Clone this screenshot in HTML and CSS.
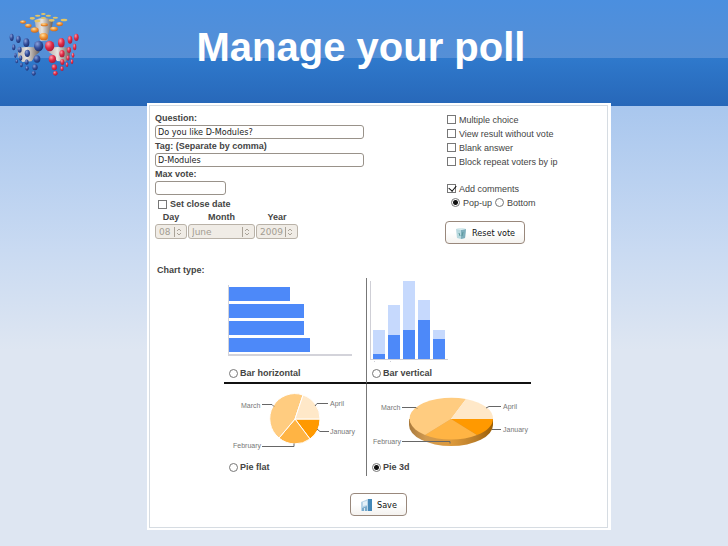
FILE: index.html
```html
<!DOCTYPE html>
<html lang="en">
<head>
    <meta charset="UTF-8">
    <meta name="viewport" content="width=device-width, initial-scale=1.0">
    <title>Manage your poll</title>
    <link rel="stylesheet" href="styles.css">
</head>
<body>
    <header class="page-header">
        <svg class="logo" viewBox="0 0 240 240" aria-hidden="true">
            <defs>
                <linearGradient id="metal">
                    <stop offset="0" stop-color="#b5aeaa"/>
                    <stop offset="0.4" stop-color="#e8e4df"/>
                    <stop offset="1" stop-color="#665c59"/>
                </linearGradient>
                <radialGradient id="navy" cx="0.35" cy="0.3" r="0.8">
                    <stop offset="0" stop-color="#8da3dc"/>
                    <stop offset="0.5" stop-color="#344f9c"/>
                    <stop offset="1" stop-color="#172966"/>
                </radialGradient>
                <radialGradient id="red" cx="0.35" cy="0.3" r="0.8">
                    <stop offset="0" stop-color="#ff9aa8"/>
                    <stop offset="0.5" stop-color="#e02a45"/>
                    <stop offset="1" stop-color="#9c1838"/>
                </radialGradient>
                <radialGradient id="orange" cx="0.4" cy="0.3" r="0.8">
                    <stop offset="0" stop-color="#ffe0a0"/>
                    <stop offset="0.5" stop-color="#f09030"/>
                    <stop offset="1" stop-color="#b85c20"/>
                </radialGradient>
            </defs>
            <path fill="url(#metal)" d="M104 60q27-12 55 0l-3 20q-9 8-11 22l-2 20h-22l-2-20q-3-14-12-22z"/>
            <path fill="url(#metal)" d="M53 145q30-7 62-1l4 12-12 10-12 18-28 2-12-14z"/>
            <path fill="url(#metal)" d="M146 144q32-6 65 1l-2 22-12 18-26-2-12-18-13-9z"/>
            <g fill="#e3c465">
                <ellipse cx="130" cy="42" rx="7" ry="3"/>
                <ellipse cx="113" cy="47" rx="8" ry="3"/>
                <ellipse cx="145" cy="47" rx="8" ry="3"/>
                <ellipse cx="97" cy="55" rx="8" ry="4"/>
                <ellipse cx="130" cy="54" rx="8" ry="3"/>
                <ellipse cx="166" cy="53" rx="8" ry="3"/>
                <ellipse cx="192" cy="60" rx="10" ry="4"/>
                <ellipse cx="155" cy="61" rx="9" ry="4"/>
                <ellipse cx="112" cy="63" rx="9" ry="4"/>
            </g>
            <g fill="url(#orange)">
                <ellipse cx="69" cy="66" rx="9" ry="5"/>
                <ellipse cx="85" cy="77" rx="10" ry="6"/>
                <ellipse cx="133" cy="74" rx="11" ry="5"/>
                <ellipse cx="179" cy="72" rx="10" ry="6"/>
                <ellipse cx="104" cy="90" rx="12" ry="8"/>
                <ellipse cx="162" cy="87" rx="12" ry="7"/>
                <ellipse cx="131" cy="110" rx="13" ry="11"/>
            </g>
            <g fill="url(#navy)">
                <ellipse cx="35" cy="112" rx="6" ry="11"/>
                <ellipse cx="55" cy="118" rx="7" ry="11"/>
                <ellipse cx="79" cy="128" rx="9" ry="13"/>
                <ellipse cx="116" cy="138" rx="14" ry="16"/>
                <ellipse cx="41" cy="142" rx="5" ry="9"/>
                <ellipse cx="59" cy="149" rx="6" ry="9"/>
                <ellipse cx="82" cy="160" rx="8" ry="11"/>
                <ellipse cx="111" cy="177" rx="10" ry="11"/>
                <ellipse cx="46" cy="166" rx="4" ry="8"/>
                <ellipse cx="62" cy="174" rx="5" ry="8"/>
                <ellipse cx="80" cy="186" rx="6" ry="8"/>
                <ellipse cx="105" cy="202" rx="8" ry="9"/>
                <ellipse cx="50" cy="184" rx="4" ry="6"/>
                <ellipse cx="64" cy="195" rx="4" ry="7"/>
                <ellipse cx="81" cy="205" rx="5" ry="7"/>
                <ellipse cx="101" cy="220" rx="6" ry="7"/>
            </g>
            <g fill="url(#red)">
                <ellipse cx="229" cy="112" rx="7" ry="11"/>
                <ellipse cx="210" cy="119" rx="7" ry="12"/>
                <ellipse cx="184" cy="128" rx="10" ry="14"/>
                <ellipse cx="149" cy="138" rx="14" ry="16"/>
                <ellipse cx="224" cy="141" rx="5" ry="10"/>
                <ellipse cx="207" cy="150" rx="6" ry="9"/>
                <ellipse cx="186" cy="161" rx="8" ry="11"/>
                <ellipse cx="157" cy="177" rx="11" ry="12"/>
                <ellipse cx="219" cy="166" rx="4" ry="8"/>
                <ellipse cx="204" cy="174" rx="5" ry="8"/>
                <ellipse cx="187" cy="186" rx="6" ry="9"/>
                <ellipse cx="163" cy="202" rx="8" ry="9"/>
                <ellipse cx="216" cy="185" rx="4" ry="7"/>
                <ellipse cx="201" cy="194" rx="4" ry="7"/>
                <ellipse cx="186" cy="206" rx="5" ry="7"/>
                <ellipse cx="166" cy="220" rx="7" ry="7"/>
            </g>
        </svg>
        <h1>Manage your poll</h1>
    </header>

    <main class="panel">
        <form class="poll-form">
            <div class="settings">
                <div class="details">
                    <label for="question">Question:</label>
                    <input type="text" id="question" class="text-input" value="Do you like D-Modules?">
                    <label for="tag">Tag: (Separate by comma)</label>
                    <input type="text" id="tag" class="text-input" value="D-Modules">
                    <label for="maxVote">Max vote:</label>
                    <input type="text" id="maxVote" class="text-input short">
                    <div class="close-date">
                        <input type="checkbox" id="closeDate">
                        <label for="closeDate">Set close date</label>
                    </div>
                    <div class="date-group">
                        <label for="day">Day</label>
                        <label for="month">Month</label>
                        <label for="year">Year</label>
                        <div class="select-box">
                            <select id="day" disabled><option>08</option></select>
                            <svg viewBox="0 0 10 10" aria-hidden="true"><path d="M.5 0v10M3 4l2-2 2 2M3 6l2 2 2-2"/></svg>
                        </div>
                        <div class="select-box">
                            <select id="month" disabled><option>June</option></select>
                            <svg viewBox="0 0 10 10" aria-hidden="true"><path d="M.5 0v10M3 4l2-2 2 2M3 6l2 2 2-2"/></svg>
                        </div>
                        <div class="select-box">
                            <select id="year" disabled><option>2009</option></select>
                            <svg viewBox="0 0 10 10" aria-hidden="true"><path d="M.5 0v10M3 4l2-2 2 2M3 6l2 2 2-2"/></svg>
                        </div>
                    </div>
                </div>

                <div class="options">
                    <div class="option">
                        <input type="checkbox" id="multiple">
                        <label for="multiple">Multiple choice</label>
                    </div>
                    <div class="option">
                        <input type="checkbox" id="viewResult">
                        <label for="viewResult">View result without vote</label>
                    </div>
                    <div class="option">
                        <input type="checkbox" id="blank">
                        <label for="blank">Blank answer</label>
                    </div>
                    <div class="option">
                        <input type="checkbox" id="blockIp">
                        <label for="blockIp">Block repeat voters by ip</label>
                    </div>
                    <div class="option comments">
                        <input type="checkbox" id="comments" checked>
                        <label for="comments">Add comments</label>
                    </div>
                    <div class="option placement">
                        <input type="radio" name="placement" id="popup" checked>
                        <label for="popup">Pop-up</label>
                        <input type="radio" name="placement" id="bottom">
                        <label for="bottom">Bottom</label>
                    </div>
                    <button type="button" class="btn">
                        <svg class="icon" viewBox="0 0 12 12" aria-hidden="true">
                            <path fill="#b9d9df" d="M1 2l5-1 5 1-1 9-4 1-4-1z"/>
                            <path fill="#7faebb" d="M6 3l5-1-1 9-4 1z"/>
                            <path fill="#dceef1" d="M1 2l5-1 5 1-5 1z"/>
                            <path fill="none" stroke="#5c9a9c" d="M4 6l1 3M8 5l-1 4"/>
                        </svg>
                        Reset vote
                    </button>
                </div>
            </div>

            <h2>Chart type:</h2>
            <div class="chart-types">
                <div class="chart">
                    <svg width="142" height="86" viewBox="0 0 142 86" aria-hidden="true">
                        <path fill="#d3d3da" d="M4 7h1v70H4zM4 76h124v2H4z"/>
                        <g fill="#4d89f9">
                            <rect x="5" y="9" width="61" height="14"/>
                            <rect x="5" y="26" width="75" height="14"/>
                            <rect x="5" y="43" width="75" height="14"/>
                            <rect x="5" y="60" width="81" height="14"/>
                        </g>
                    </svg>
                    <div class="choice">
                        <input type="radio" name="chart" id="barHorizontal">
                        <label for="barHorizontal">Bar horizontal</label>
                    </div>
                </div>
                <div class="chart">
                    <svg width="142" height="86" viewBox="0 0 142 86" aria-hidden="true">
                        <path fill="#cfcfd6" d="M3 3h1v78H3zM3 81h78v1H3zM7 83h1v1H7zM23 83h1v1H23z"/>
                        <g fill="#c6d9fd">
                            <rect x="6" y="52" width="12" height="24"/>
                            <rect x="21" y="27" width="12" height="30"/>
                            <rect x="36" y="3" width="12" height="49"/>
                            <rect x="51" y="22" width="12" height="20"/>
                            <rect x="66" y="52" width="12" height="9"/>
                        </g>
                        <g fill="#4d89f9">
                            <rect x="6" y="76" width="12" height="5"/>
                            <rect x="21" y="57" width="12" height="24"/>
                            <rect x="36" y="52" width="12" height="29"/>
                            <rect x="51" y="42" width="12" height="39"/>
                            <rect x="66" y="61" width="12" height="20"/>
                        </g>
                    </svg>
                    <div class="choice">
                        <input type="radio" name="chart" id="barVertical">
                        <label for="barVertical">Bar vertical</label>
                    </div>
                </div>
                <div class="chart">
                    <svg class="pie" width="142" height="74" viewBox="0 0 142 74">
                        <g stroke="#fff" stroke-width="1">
                            <path fill="#ff9900" d="M71 35h25a25 25 0 0 1-10 20z"/>
                            <path fill="#ffb444" d="M71 35l15 20a25 25 0 0 1-31-1z"/>
                            <path fill="#ffcc80" d="M71 35L55 54a25 25 0 0 1 24-43z"/>
                            <path fill="#ffe8c8" d="M71 35l8-24a25 25 0 0 1 17 24z"/>
                        </g>
                        <path class="leader" d="M38 20.5h10l2 2M91 22l2-2.500h11M93 45l3 2.500h9M38 62.500h32v-3"/>
                        <text x="17" y="24">March</text>
                        <text x="106" y="22">April</text>
                        <text x="106" y="50">January</text>
                        <text x="9" y="64">February</text>
                    </svg>
                    <div class="choice">
                        <input type="radio" name="chart" id="pieFlat">
                        <label for="pieFlat">Pie flat</label>
                    </div>
                </div>
                <div class="chart">
                    <svg class="pie" width="164" height="74" viewBox="0 0 164 74">
                        <defs>
                            <linearGradient id="rim">
                                <stop offset="0" stop-color="#a97a3c"/>
                                <stop offset="0.2" stop-color="#d19a50"/>
                                <stop offset="0.5" stop-color="#dd9a3c"/>
                                <stop offset="0.8" stop-color="#b97c28"/>
                                <stop offset="1" stop-color="#9c5d00"/>
                            </linearGradient>
                        </defs>
                        <path fill="url(#rim)" d="M42 35v6a42 21 0 0 0 84 0v-6z"/>
                        <path fill="#ff9900" d="M84 35h42a42 21 0 0 1-16 16z"/>
                        <path fill="#ffb444" d="M84 35l26 16a42 21 0 0 1-52 0z"/>
                        <path fill="#ffcc80" d="M84 35L58 51a42 21 0 0 1 41-36z"/>
                        <path fill="#ffe8c8" d="M84 35l15-20a42 21 0 0 1 27 20z"/>
                        <path class="leader" d="M35 23.500h14l1 1M119 24l3-1.500h12M125 45.500h9M35 57.500h48v2"/>
                        <text x="14" y="26">March</text>
                        <text x="136" y="25">April</text>
                        <text x="136" y="48">January</text>
                        <text x="6" y="60">February</text>
                    </svg>
                    <div class="choice">
                        <input type="radio" name="chart" id="pie3d" checked>
                        <label for="pie3d">Pie 3d</label>
                    </div>
                </div>
            </div>

            <button type="submit" class="btn btn-save">
                <svg class="icon" viewBox="0 0 12 12" aria-hidden="true">
                    <path fill="#b8d4e8" d="M1 3l7-3v12H1z"/>
                    <path fill="#4588b8" d="M8 0h4v12H8z"/>
                    <path fill="#e4f0f8" d="M3 3l4-1v4L3 7z"/>
                    <path fill="#7aaacb" d="M2 9l5-2v5H2z"/>
                    <path fill="#dcebf5" d="M4 9h1v3H4z"/>
                </svg>
                Save
            </button>
        </form>
    </main>
</body>
</html>
```

FILE: styles.css
```css
* {
    box-sizing: border-box;
}

body {
    margin: 0;
    min-height: 100vh;
    font-family: "Liberation Sans", Arial, sans-serif;
    font-size: 9px;
    line-height: 14px;
    color: #444;
    background: linear-gradient(#a9c7ee 106px, #c9daf2 250px, #dee6f2 350px);
}

/* Header */
.page-header {
    display: grid;
    grid-template-columns: 80px 1fr 86px;
    height: 106px;
    background: linear-gradient(#4b8fdf, #558fd6 58px, #2f79cc 58px, #2767b8);
}

.logo {
    width: 80px;
    height: 80px;
}

h1 {
    margin: 24px 0 0;
    font-size: 40px;
    line-height: 46px;
    text-align: center;
    color: white;
}

/* Form panel */
.panel {
    position: relative;
    margin: -3px 117px 16px 147px;
    padding: 2px 3px 2px 2px;
    background-color: white;
}

.poll-form {
    padding: 5px 0 11px 5px;
    border: 1px solid #d6dce2;
}

.settings {
    display: grid;
    grid-template-columns: 1fr 162px;
}

.details {
    display: flex;
    flex-direction: column;
    align-items: flex-start;
    font-weight: bold;
}

.text-input {
    width: 209px;
    height: 14px;
    padding: 0 2px;
    border: 1px solid #99928a;
    border-radius: 3px;
    background-color: white;
    font: 9px "DejaVu Sans Condensed", "DejaVu Sans", sans-serif;
    color: #222;
}

.short {
    width: 71px;
}

.close-date {
    display: flex;
    align-items: center;
    gap: 3px;
    height: 16px;
    padding: 2px 0 0 3px;
}

.date-group {
    display: grid;
    grid-template-columns: 32px 67px 42px;
    column-gap: 1px;
    line-height: 13px;
    text-align: center;
}

/* Select with the up/down arrows on its right edge */
.select-box {
    display: grid;
    align-items: center;
}

.select-box select,
.select-box svg {
    grid-area: 1 / 1;
}

.select-box select {
    width: 100%;
    height: 15px;
    padding: 0 3px;
    border: 1px solid #b9b2a8;
    border-radius: 3px;
    appearance: none;
    background-color: #f0ece6;
    font: 9px "DejaVu Sans", sans-serif;
    color: #a39c92;
    opacity: 1;
}

.select-box svg {
    justify-self: end;
    width: 10px;
    height: 10px;
    margin-right: 3px;
    fill: none;
    stroke: #aaa398;
    pointer-events: none;
}

/* Tick boxes and radios */
input[type="checkbox"],
input[type="radio"] {
    flex: none;
    width: 9px;
    height: 9px;
    margin: 0;
    border: 1px solid #777;
    appearance: none;
    background-color: white;
}

input[type="radio"] {
    border-radius: 50%;
}

input[type="radio"]:checked {
    background: radial-gradient(circle, #111 2px, white 3px);
}

input[type="checkbox"]:checked::after {
    content: "";
    display: block;
    width: 4px;
    height: 6px;
    margin: -1px 0 0 2px;
    border: solid #111;
    border-width: 0 1px 1px 0;
    transform: rotate(40deg);
}

.options {
    display: flex;
    flex-direction: column;
    align-items: flex-start;
    padding-top: 2px;
}

.option {
    display: flex;
    align-items: center;
    gap: 3px;
    height: 14px;
    padding-left: 2px;
}

.option input {
    margin-bottom: 2px;
}

.comments {
    margin-top: 13px;
}

.placement {
    padding-left: 6px;
}

.btn {
    display: flex;
    align-items: center;
    gap: 5px;
    height: 23px;
    margin-top: 11px;
    padding: 0 9px;
    border: 1px solid #99887c;
    border-radius: 4px;
    background: linear-gradient(white 50%, #f4f2ef);
    font: 9px "DejaVu Sans Condensed", "DejaVu Sans", sans-serif;
    color: #111;
    cursor: pointer;
}

.icon {
    width: 12px;
    height: 12px;
}

/* Chart types */
h2 {
    margin: 18px 0 0 2px;
    font-size: 9px;
    line-height: 16px;
}

.chart-types {
    display: grid;
    grid-template-columns: 143px 164px;
    margin: 0 0 0 69px;
}

.chart {
    display: flex;
    flex-direction: column;
}

.chart:nth-child(odd) {
    border-right: 1px solid #777;
}

.chart:nth-child(-n+2) {
    border-bottom: 2px solid #111;
}

.choice {
    display: flex;
    align-items: center;
    gap: 2px;
    height: 18px;
    padding-left: 5px;
    font-weight: bold;
}

.pie text {
    font-size: 7px;
    fill: #777;
}

.leader {
    fill: none;
    stroke: #666;
}

.btn-save {
    margin: 17px auto 0 195px;
}
```
